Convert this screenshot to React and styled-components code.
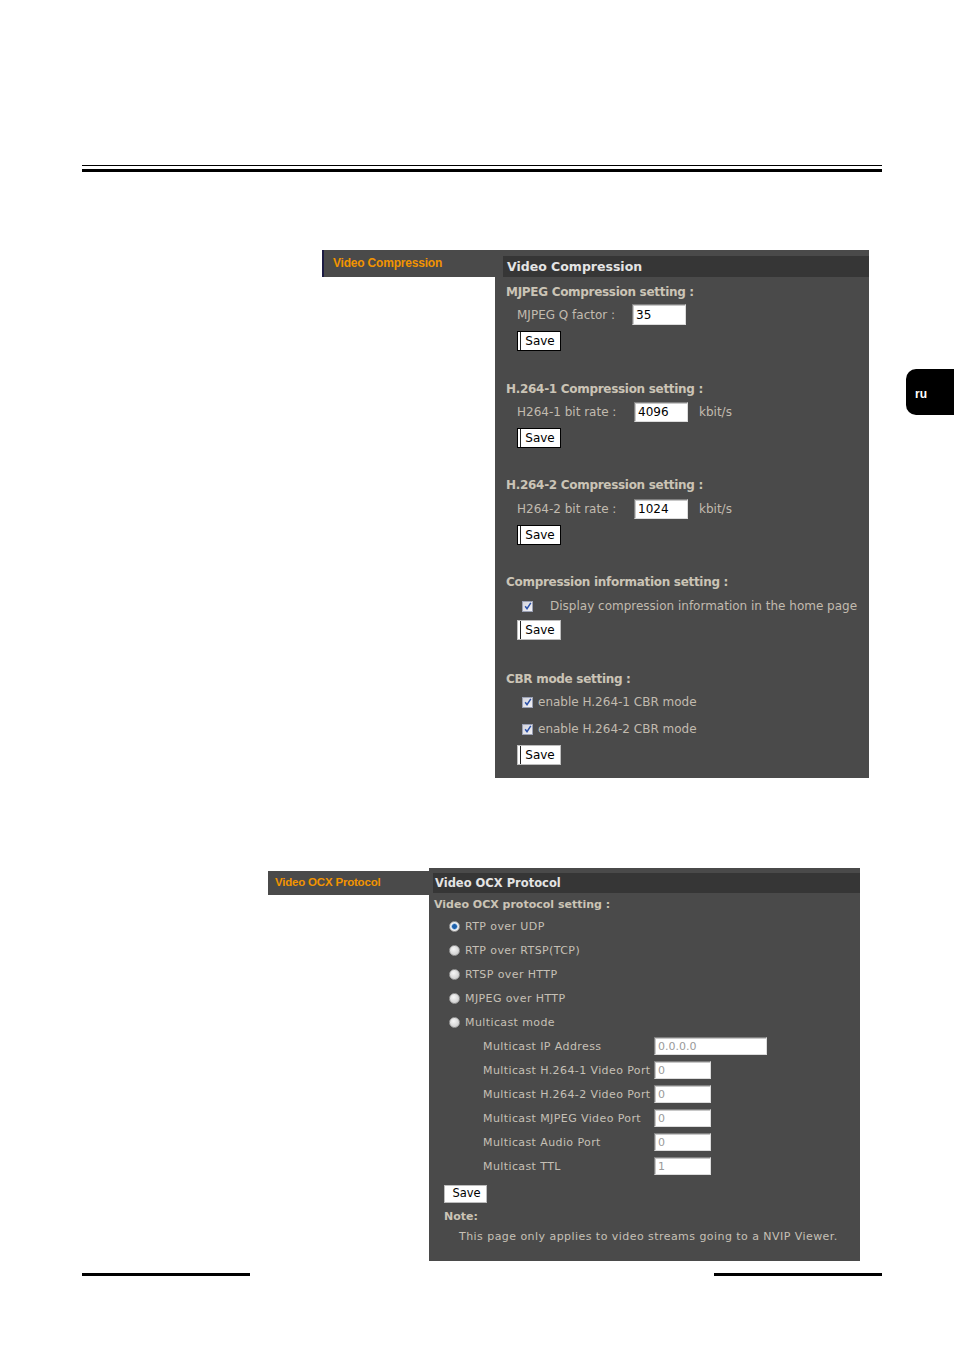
import styled, { createGlobalStyle } from "styled-components";

const GlobalStyle = createGlobalStyle`
    body {
        margin: 0;
        background: #fff;
    }
`;

const Page = styled.div`
    position: relative;
    width: 954px;
    height: 1350px;
    overflow: hidden;
    font-family: "DejaVu Sans", Verdana, sans-serif;
`;

const TopRule = styled.div`
    margin: 165px 72px 0 82px;
    display: flex;
    flex-direction: column;
    gap: 3px;
`;

const Line = styled.div`
    height: ${(p) => p.$h}px;
    background: #000;
    width: ${(p) => (p.$w ? `${p.$w}px` : "auto")};
`;

const LangBadge = styled.div`
    position: absolute;
    top: 369px;
    right: 0;
    width: 39px;
    height: 46px;
    padding-left: 9px;
    background: #000;
    border-radius: 10px 0 0 10px;
    color: #fff;
    font: bold 12px "Liberation Sans", Arial, sans-serif;
    line-height: 50px;
`;

const Section = styled.div`
    display: flex;
    align-items: flex-start;
    margin-top: ${(p) => p.$top}px;
    padding-left: ${(p) => p.$left}px;
`;

const Tab = styled.div`
    box-sizing: border-box;
    width: ${(p) => p.$w}px;
    height: ${(p) => p.$h}px;
    margin-top: ${(p) => p.$top || 0}px;
    background: #4a4a4a;
    border-left: ${(p) => (p.$edge ? "2px solid #1c1c44" : "none")};
    color: #f29400;
    font: bold ${(p) => p.$size}px "Liberation Sans", Arial, sans-serif;
    letter-spacing: -0.2px;
    padding-left: ${(p) => p.$pad}px;
    line-height: ${(p) => p.$h - 1}px;
`;

const Panel = styled.div`
    box-sizing: border-box;
    width: ${(p) => p.$w}px;
    background: #4a4a4a;
    padding: ${(p) => p.$pt}px 0 ${(p) => p.$pb}px 0;
`;

const TitleBar = styled.div`
    height: ${(p) => p.$h}px;
    margin-left: ${(p) => p.$ml}px;
    background: #363636;
    color: #e4e4e4;
    font-weight: bold;
    font-size: ${(p) => p.$size}px;
    line-height: ${(p) => p.$h}px;
    padding-left: ${(p) => p.$pl}px;
`;

const Body = styled.div`
    padding-left: ${(p) => p.$pl}px;
`;

const Heading = styled.div`
    height: ${(p) => p.$h || 20}px;
    line-height: ${(p) => p.$h || 20}px;
    margin-top: ${(p) => p.$top}px;
    margin-left: ${(p) => p.$ml || 0}px;
    color: #cbc4b6;
    font-weight: bold;
    font-size: ${(p) => p.$size || 12}px;
    letter-spacing: ${(p) => p.$ls ?? -0.3}px;
`;

const Row = styled.div`
    display: flex;
    align-items: center;
    height: ${(p) => p.$h || 23}px;
    margin-top: ${(p) => p.$top || 0}px;
    padding-left: ${(p) => p.$pl}px;
    color: #c2bbaf;
    font-size: 12px;
`;

const Label = styled.span`
    width: ${(p) => p.$w}px;
    flex: none;
`;

const TextBox = styled.input`
    box-sizing: border-box;
    width: ${(p) => p.$w}px;
    height: ${(p) => p.$h}px;
    margin: 0 ${(p) => p.$gap || 0}px 0 0;
    padding: 0 3px;
    background: #fff;
    border: 1px solid;
    border-color: #808080 #dcdcdc #dcdcdc #808080;
    box-shadow: inset 1px 1px 0 #c8c8c8;
    font-family: "DejaVu Sans", Verdana, sans-serif;
    font-size: ${(p) => p.$size}px;
    color: ${(p) => (p.$dim ? "#9a9a9a" : "#000")};
    outline: none;
`;

const SaveButton = styled.button`
    box-sizing: border-box;
    display: block;
    width: ${(p) => p.$w}px;
    height: ${(p) => p.$h}px;
    margin-top: ${(p) => p.$top}px;
    margin-left: ${(p) => p.$ml}px;
    padding: 0 0 0 2px;
    background: #fff;
    border: 1px solid ${(p) => (p.$focus ? "#000" : "#bdbdbd")};
    box-shadow: ${(p) =>
        p.$line ? "inset 2px 0 0 #fff, inset 3px 0 0 #222" : "none"};
    font-family: "DejaVu Sans", Verdana, sans-serif;
    font-size: ${(p) => p.$size}px;
    color: #000;
    line-height: 1;
`;

const Check = styled.span`
    box-sizing: border-box;
    display: inline-flex;
    align-items: center;
    justify-content: center;
    width: 11px;
    height: 11px;
    margin-left: ${(p) => p.$ml}px;
    margin-right: ${(p) => p.$gap}px;
    border: 1px solid #9aa0b4;
    background: linear-gradient(135deg, #d4d4dc, #f2f2f6);
`;

const Radio = styled.span`
    box-sizing: border-box;
    display: inline-block;
    width: 11px;
    height: 11px;
    margin-left: 15px;
    margin-right: 5px;
    border-radius: 50%;
    border: 1px solid #9c9c9c;
    background: ${(p) =>
        p.$on
            ? "radial-gradient(circle, #1d5fa8 0 2px, #6aa0d8 2.5px, #f4f4f4 3.5px, #cfcfcf 100%)"
            : "radial-gradient(circle at 40% 35%, #f6f6f6, #c4c4c4)"};
`;

const OcxRow = styled.div`
    display: flex;
    align-items: center;
    height: 24px;
    color: #c6c0b6;
    font-size: 11px;
    letter-spacing: 0.4px;
`;

const FieldLabel = styled.span`
    width: ${(p) => p.$w}px;
    padding-left: 49px;
    flex: none;
`;

const Note = styled.div`
    height: 18px;
    line-height: 18px;
    margin-top: 2px;
    padding-left: 25px;
    color: #c6c0b6;
    font-size: 11px;
    letter-spacing: 0.45px;
`;

const Footer = styled.div`
    display: flex;
    justify-content: space-between;
    margin: 12px 72px 0 82px;
`;

function CheckMark() {
    return (
        <svg width="8" height="8" viewBox="0 0 8 8">
            <path d="M1.2 4.2 L3 6.6 L6.8 0.8" fill="none" stroke="#2a50a8" strokeWidth="1.5" />
        </svg>
    );
}

const radios = ["RTP over UDP", "RTP over RTSP(TCP)", "RTSP over HTTP", "MJPEG over HTTP", "Multicast mode"];

const multicast = [
    ["Multicast IP Address", "0.0.0.0", 113],
    ["Multicast H.264-1 Video Port", "0", 57],
    ["Multicast H.264-2 Video Port", "0", 57],
    ["Multicast MJPEG Video Port", "0", 57],
    ["Multicast Audio Port", "0", 57],
    ["Multicast TTL", "1", 57],
];

export default function App() {
    return (
        <Page>
            <GlobalStyle />
            <TopRule>
                <Line $h={1} />
                <Line $h={3} />
            </TopRule>
            <LangBadge>ru</LangBadge>

            <Section $top={78} $left={322}>
                <Tab $w={173} $h={27} $size={12} $pad={9} $edge>
                    Video Compression
                </Tab>
                <Panel $w={374} $pt={6} $pb={13}>
                    <TitleBar $h={21} $ml={8} $pl={4} $size={12.5}>
                        Video Compression
                    </TitleBar>
                    <Body $pl={11}>
                        <Heading $top={5}>MJPEG Compression setting :</Heading>
                        <Row $pl={11} $top={1}>
                            <Label $w={115}>MJPEG Q factor :</Label>
                            <TextBox $w={54} $h={21} $size={12} defaultValue="35" />
                        </Row>
                        <SaveButton $w={44} $h={20} $top={5} $ml={11} $size={12} $focus $line>
                            Save
                        </SaveButton>

                        <Heading $top={28}>H.264-1 Compression setting :</Heading>
                        <Row $pl={11} $top={1}>
                            <Label $w={117}>H264-1 bit rate :</Label>
                            <TextBox $w={54} $h={20} $size={12} $gap={11} defaultValue="4096" />
                            <span>kbit/s</span>
                        </Row>
                        <SaveButton $w={44} $h={20} $top={5} $ml={11} $size={12} $focus $line>
                            Save
                        </SaveButton>

                        <Heading $top={27}>H.264-2 Compression setting :</Heading>
                        <Row $pl={11} $top={2}>
                            <Label $w={117}>H264-2 bit rate :</Label>
                            <TextBox $w={54} $h={20} $size={12} $gap={11} defaultValue="1024" />
                            <span>kbit/s</span>
                        </Row>
                        <SaveButton $w={44} $h={20} $top={5} $ml={11} $size={12} $focus $line>
                            Save
                        </SaveButton>

                        <Heading $top={27}>Compression information setting :</Heading>
                        <Row $pl={0} $top={3} $h={22}>
                            <Check $ml={16} $gap={17}>
                                <CheckMark />
                            </Check>
                            <span>Display compression information in the home page</span>
                        </Row>
                        <SaveButton $w={44} $h={20} $top={3} $ml={11} $size={12} $line>
                            Save
                        </SaveButton>

                        <Heading $top={29}>CBR mode setting :</Heading>
                        <Row $pl={0} $top={2} $h={22}>
                            <Check $ml={16} $gap={5}>
                                <CheckMark />
                            </Check>
                            <span>enable H.264-1 CBR mode</span>
                        </Row>
                        <Row $pl={0} $top={5} $h={22}>
                            <Check $ml={16} $gap={5}>
                                <CheckMark />
                            </Check>
                            <span>enable H.264-2 CBR mode</span>
                        </Row>
                        <SaveButton $w={44} $h={20} $top={5} $ml={11} $size={12} $line>
                            Save
                        </SaveButton>
                    </Body>
                </Panel>
            </Section>

            <Section $top={90} $left={268}>
                <Tab $w={161} $h={24} $top={3} $size={11.5} $pad={7}>
                    Video OCX Protocol
                </Tab>
                <Panel $w={431} $pt={5} $pb={15}>
                    <TitleBar $h={20} $ml={4} $pl={2} $size={11.5}>
                        Video OCX Protocol
                    </TitleBar>
                    <Body $pl={5}>
                        <Heading $top={3} $h={18} $size={11} $ls={0}>
                            Video OCX protocol setting :
                        </Heading>
                        {radios.map((r, i) => (
                            <OcxRow key={r}>
                                <Radio $on={i === 0} />
                                <span>{r}</span>
                            </OcxRow>
                        ))}
                        {multicast.map(([label, value, w]) => (
                            <OcxRow key={label}>
                                <FieldLabel $w={171}>{label}</FieldLabel>
                                <TextBox $w={w} $h={18} $size={11} $dim defaultValue={value} />
                            </OcxRow>
                        ))}
                        <SaveButton $w={43} $h={18} $top={7} $ml={10} $size={11.5}>
                            Save
                        </SaveButton>
                        <Heading $top={5} $h={18} $size={11} $ls={0} $ml={10}>
                            Note:
                        </Heading>
                        <Note>This page only applies to video streams going to a NVIP Viewer.</Note>
                    </Body>
                </Panel>
            </Section>

            <Footer>
                <Line $h={3} $w={168} />
                <Line $h={3} $w={168} />
            </Footer>
        </Page>
    );
}
